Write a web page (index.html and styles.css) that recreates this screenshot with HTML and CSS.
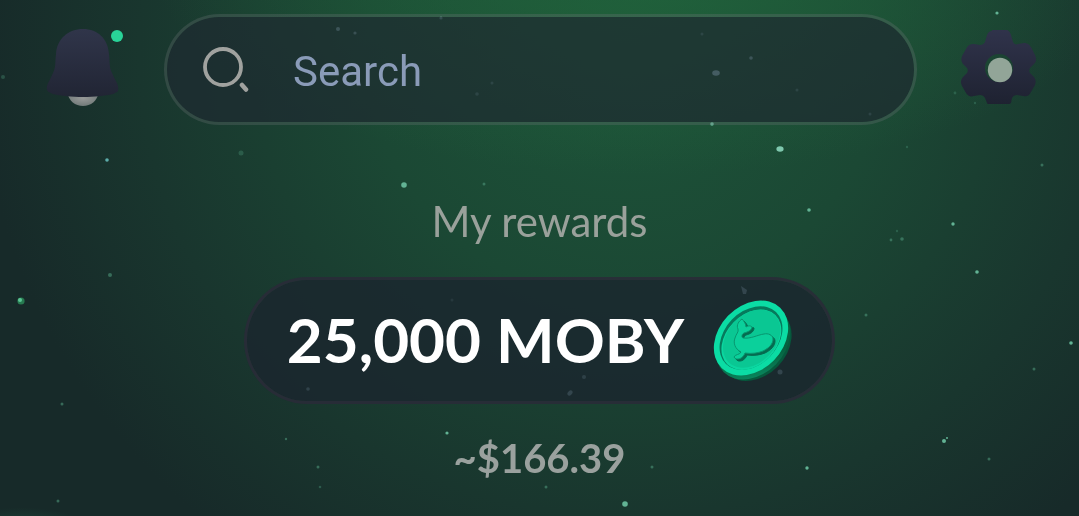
FILE: index.html
```html
<!DOCTYPE html>
<html lang="en">
<head>
<meta charset="utf-8">
<meta name="viewport" content="width=device-width, initial-scale=1">
<title>My rewards</title>
<link rel="stylesheet" href="styles.css">
</head>
<body>
<svg class="stars" viewBox="0 0 1079 516" preserveAspectRatio="xMidYMin slice" aria-hidden="true">
  <g fill="#62b394">
    <circle cx="404" cy="185" r="2.8"/>
    <ellipse cx="780" cy="149" rx="3.6" ry="2.8" fill="#7fc8ae"/>
    <circle cx="809" cy="210" r="1.8"/>
    <circle cx="953" cy="224" r="1.7"/>
    <circle cx="977" cy="272" r="1.8"/>
    <circle cx="997" cy="13" r="1.6"/>
    <circle cx="712" cy="124" r="1.8"/>
    <circle cx="447" cy="433" r="1.6"/>
    <circle cx="944" cy="441" r="2"/>
    <circle cx="947" cy="438" r="1"/>
    <circle cx="1071" cy="343" r="1.8"/>
    <circle cx="807" cy="468" r="1.7"/>
    <circle cx="625" cy="504" r="2.8"/>
  </g>
  <circle cx="21" cy="301" r="3.6" fill="#277a50"/>
  <circle cx="20" cy="300" r="2" fill="#5cc495"/>
  <circle cx="107" cy="160" r="1.8" fill="#5cabaa"/>
  <g fill="#4d9479" opacity=".6">
    <circle cx="241" cy="153" r="2.5" opacity=".6"/>
    <circle cx="484" cy="184" r="1.5"/>
    <circle cx="110" cy="275" r="2"/>
    <circle cx="62" cy="404" r="1.5"/>
    <circle cx="318" cy="467" r="1.5"/>
    <circle cx="652" cy="467" r="1.5"/>
    <circle cx="546" cy="487" r="1.5"/>
    <circle cx="1034" cy="369" r="1.5"/>
    <circle cx="1042" cy="165" r="1.5"/>
    <circle cx="989" cy="459" r="1.5"/>
    <circle cx="866" cy="315" r="1.5"/>
    <circle cx="58" cy="501" r="1.5"/>
    <circle cx="3" cy="77" r="2" opacity=".6"/>
    <circle cx="286" cy="439" r="1.2"/>
    <circle cx="320" cy="487" r="1.3" opacity=".7"/>
    <circle cx="891" cy="240" r="1.4"/>
    <circle cx="902" cy="239" r="1.8"/>
    <circle cx="897" cy="231" r="1.2" opacity=".6"/>
    <circle cx="955" cy="93" r="1.4" opacity=".6"/>
    <circle cx="975" cy="103" r="1.2" opacity=".6"/>
    <circle cx="907" cy="147" r="1.2" opacity=".6"/>
  </g>
  <!-- these sit behind the translucent pills -->
  <g fill="#9fd3d6">
    <circle cx="338" cy="29" r="2" opacity=".8"/>
    <circle cx="355" cy="33" r="1.6" opacity=".7"/>
    <circle cx="441" cy="18" r="1.6" opacity=".6"/>
    <ellipse cx="716" cy="73" rx="3.8" ry="2.8"/>
    <circle cx="751" cy="58" r="1.8" opacity=".8"/>
    <circle cx="702" cy="34" r="1.5" opacity=".4"/>
    <circle cx="492" cy="83" r="1.5" opacity=".4"/>
    <circle cx="477" cy="94" r="1.8" opacity=".4"/>
    <circle cx="797" cy="90" r="1.5" opacity=".4"/>
    <circle cx="870" cy="114" r="1.5" opacity=".4"/>
    <path d="m741 286 6 4-1 4h-3z"/>
    <circle cx="780" cy="372" r="2.5"/>
    <circle cx="584" cy="377" r="2" opacity=".8"/>
    <ellipse cx="570" cy="393" rx="3" ry="2" transform="rotate(-45 570 393)"/>
    <circle cx="308" cy="389" r="1.8" opacity=".9"/>
    <circle cx="452" cy="300" r="1.5" opacity=".5"/>
  </g>
</svg>

<header class="topbar">
  <button class="icon-btn" type="button" aria-label="Notifications">
    <svg viewBox="0 0 76 80">
      <defs>
        <linearGradient id="bell" x1="0" y1="0" x2="0" y2="1">
          <stop offset="0" stop-color="#30354a"/>
          <stop offset="1" stop-color="#212534"/>
        </linearGradient>
        <radialGradient id="clapper" cx=".5" cy=".45" r=".55">
          <stop offset="0" stop-color="#979998"/>
          <stop offset="1" stop-color="#717a79"/>
        </radialGradient>
      </defs>
      <path d="M23 62h32c-2 9-8 14-16 14s-14-5-16-14z" fill="url(#clapper)"/>
      <path d="M39 -1c-15 0-26 10-27 25-1 8 0 13-3 19-2 5-5 9-6 13-1 5 1 6 6 8 16 4 44 4 60 0 5-2 6-3 5-8-1-4-4-8-6-13-3-6-2-11-3-19C64 9 54-1 39-1z" fill="url(#bell)"/>
    </svg>
    <span class="dot"></span>
  </button>

  <label class="search">
    <svg class="search-icon" viewBox="0 0 46 46" fill="none" stroke="#a0a29f" aria-hidden="true">
      <circle cx="20" cy="20" r="18" stroke-width="3.800"/>
      <path d="M39 38l4 4.500" stroke-width="4.500" stroke-linecap="round"/>
    </svg>
    <input type="search" placeholder="Search" aria-label="Search">
  </label>

  <button class="icon-btn" type="button" aria-label="Settings">
    <svg viewBox="0 0 76 80">
      <defs>
        <linearGradient id="gear" x1="0" y1="0" x2="0" y2="1">
          <stop offset="0" stop-color="#30334b"/>
          <stop offset="1" stop-color="#1e2231"/>
        </linearGradient>
      </defs>
      <g transform="translate(-2 -1)">
        <path fill="url(#gear)" fill-rule="evenodd" d="M33 1h14c3 0 4 2 5 5l2 7c1 2 3 3 5 2l6-1c4 0 6 2 8 6l3 6c2 4 1 7-1 9l-4 4c-1 2-1 4 0 5l4 4c2 3 2 5 1 8l-4 7c-2 4-4 5-8 4l-6-1c-2 0-4 1-5 3l-1 5c-1 1-2 1-3 1H31c-2 0-3 0-3-1l-2-5c-1-2-3-3-5-3l-6 1c-4 1-6 0-8-3l-4-7c-2-4-1-6 1-9l4-4c1-2 1-4 0-5l-4-4c-2-3-2-5-1-8l4-7c2-4 4-5 8-5l6 1c2 0 4-1 5-3l2-7c1-2 2-4 5-4zM40 25a14 14 0 1 0 0 28 14 14 0 0 0 0-28z"/>
        <circle cx="41" cy="41" r="12.200" fill="#92a598"/>
      </g>
    </svg>
  </button>
</header>

<main class="rewards">
  <h1 class="rewards-title">My rewards</h1>
  <button class="balance" type="button">
    <span>25,000 MOBY</span>
    <svg class="coin" viewBox="0 0 80 82" aria-hidden="true">
      <defs>
        <linearGradient id="coinEdge" x1="0" y1="1" x2="1" y2="0">
          <stop offset="0" stop-color="#0a9a6c"/>
          <stop offset=".4" stop-color="#06603f"/>
          <stop offset="1" stop-color="#07704c"/>
        </linearGradient>
      </defs>
      <ellipse cx="43" cy="44" rx="41" ry="32" transform="rotate(-46 43 44)" fill="#06583c"/>
      <ellipse cx="41" cy="42" rx="42" ry="32" transform="rotate(-46 41 42)" fill="url(#coinEdge)"/>
      <g transform="rotate(-46 39 38)">
        <ellipse cx="39" cy="38" rx="42" ry="32" fill="#0bdca4"/>
        <ellipse cx="39" cy="38" rx="36" ry="26.500" fill="#067a5c"/>
        <ellipse cx="38" cy="39.500" rx="34.500" ry="25" fill="#0bd6a0"/>
        <ellipse cx="39" cy="39" rx="33" ry="24" fill="#0ac793"/>
      </g>
      <g stroke-linejoin="round">
        <path d="M32 21c-3 2-6 6-4 10 1 3-2 5-3 9-2 5 0 11 6 14-1 3-6 2-7 5 2 4 9 2 11-4 7 1 13 0 18-2 6-3 10-7 10-12 0-4-5-6-9-5-7 1-13 5-21 4-2-1-1-4 1-5 4-1 8-3 8-7-2-1-4-1-6 0 0-2-2-5-4-7z" fill="#056b50" stroke="#056b50"/>
        <path d="M30 19c-3 2-6 6-4 10 1 3-2 5-3 9-2 5 0 11 6 14-1 3-6 2-7 5 2 4 9 2 11-4 7 1 13 0 18-2 6-3 10-7 10-12 0-4-5-6-9-5-7 1-13 5-21 4-2-1-1-4 1-5 4-1 8-3 8-6-2-2-4-1-6 0 0-3-2-6-4-8z" fill="#0bd09b" stroke="#08966f"/>
      </g>
    </svg>
  </button>
  <p class="fiat">~$166.39</p>
</main>
</body>
</html>
```

FILE: styles.css
```css
* {
  box-sizing: border-box;
}
body {
  margin: 0;
  min-height: 100vh;
  position: relative;
  overflow-x: hidden;
  color: #fff;
  font-family: Lato, "Liberation Sans", sans-serif;
  background:
    radial-gradient(ellipse 70px 24px at 2% 103%, rgba(32, 90, 70, 0.6), rgba(32, 90, 70, 0) 100%),
    radial-gradient(ellipse 46% 42% at 60% -8%, rgba(34, 104, 60, 0.75), rgba(34, 104, 60, 0) 100%),
    radial-gradient(ellipse 60% 120% at 58% 10%, #1d5439 0%, #1b4834 40%, #19362e 75%, #172a29 100%);
}
button {
  border: 0;
  padding: 0;
  background: none;
  color: inherit;
  font: inherit;
  cursor: pointer;
}
.stars {
  position: absolute;
  top: 0;
  left: 0;
  width: 100%;
  height: 100%;
  z-index: -1;
}
.topbar {
  display: flex;
  align-items: center;
  gap: 44px;
  padding: 14px 42px 0 44px;
}
.icon-btn {
  position: relative;
  flex: none;
  width: 76px;
}
.icon-btn svg {
  display: block;
  width: 100%;
  overflow: visible;
}
.dot {
  position: absolute;
  top: 0;
  right: -3px;
  width: 12px;
  height: 12px;
  border-radius: 50%;
  background: #29d398;
}
.search {
  flex: 1;
  min-width: 0;
  display: flex;
  align-items: center;
  gap: 44px;
  height: 111px;
  padding: 0 36px;
  border: 3px solid rgba(110, 115, 120, 0.3);
  border-radius: 56px;
  background: rgba(30, 42, 48, 0.7);
  background-clip: padding-box;
}
.search-icon {
  flex: none;
  width: 46px;
}
.search input {
  flex: 1;
  min-width: 0;
  padding: 4px 0 0;
  border: 0;
  outline: none;
  background: none;
  color: #8a9bb8;
  font-family: Roboto, sans-serif;
  font-size: 42px;
}
.search input::placeholder {
  color: #8a9bb8;
  opacity: 1;
}
.rewards {
  display: flex;
  flex-direction: column;
  align-items: center;
  padding: 70px 44px 24px;
}
.rewards-title {
  margin: 0 0 30px;
  color: #9aa19b;
  font-size: 42px;
  font-weight: 400;
  line-height: 52px;
}
.balance {
  display: flex;
  align-items: center;
  gap: 28px;
  height: 127px;
  padding: 0 40px;
  border: 3px solid rgba(42, 42, 56, 0.85);
  border-radius: 64px;
  background: rgba(27, 38, 46, 0.82);
  background-clip: padding-box;
  font-size: 62px;
  line-height: 72px;
  font-weight: 700;
}
.balance span {
  padding-bottom: 4px;
}
.coin {
  flex: none;
  width: 80px;
  overflow: visible;
}
.fiat {
  margin: 28px 0 0;
  color: #9aa19e;
  font-size: 40px;
  font-weight: 700;
  line-height: 52px;
}
```
